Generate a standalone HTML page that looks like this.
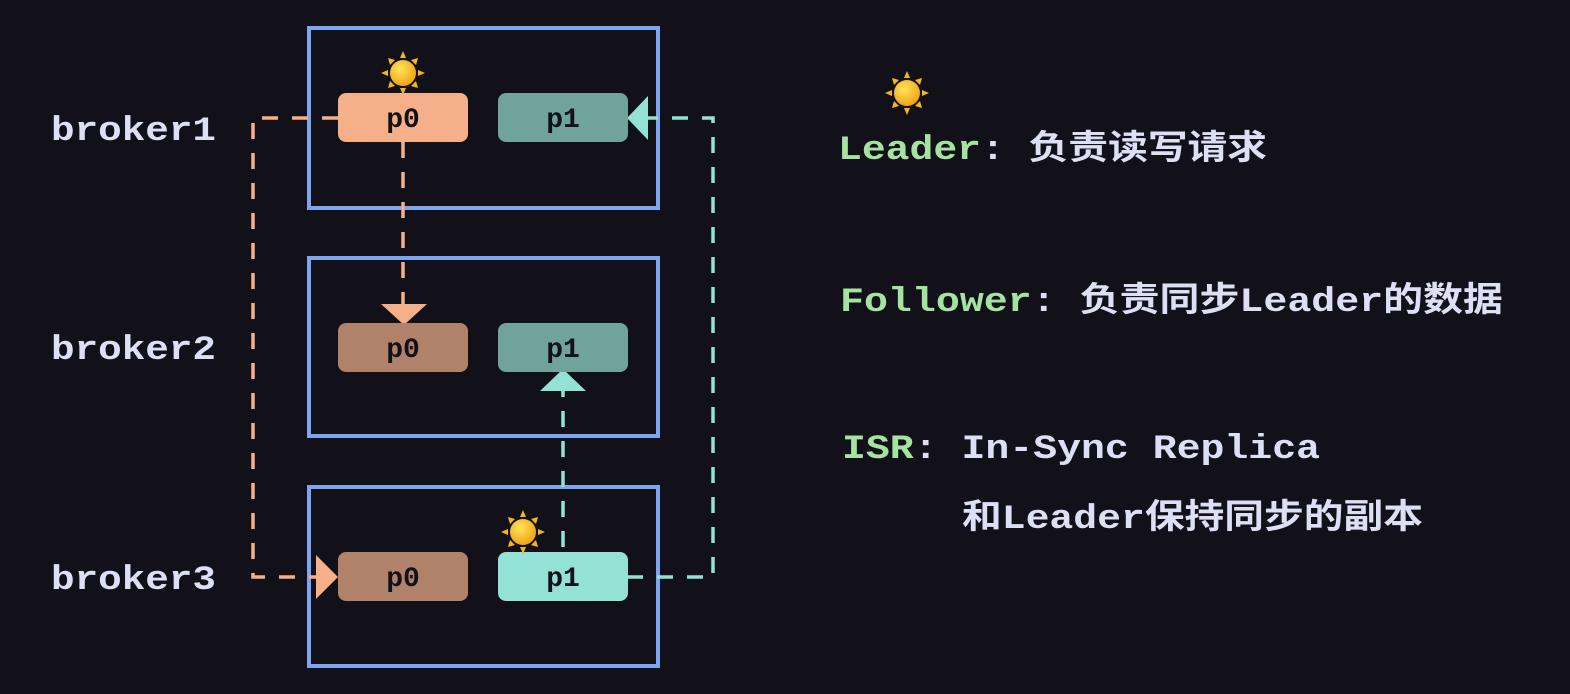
<!DOCTYPE html>
<html><head><meta charset="utf-8"><style>
html,body{margin:0;padding:0;background:#12111a;}
svg{display:block}
text{font-family:"Liberation Mono","Noto Sans CJK SC",monospace;font-weight:bold;}
</style></head><body>
<svg width="1570" height="694" viewBox="0 0 1570 694" xmlns="http://www.w3.org/2000/svg">
<defs>
<radialGradient id="sg" cx="0.4" cy="0.35" r="0.7"><stop offset="0" stop-color="#ffe45a"/><stop offset="1" stop-color="#f0a010"/></radialGradient>
<g id="sun">
<g fill="#f2b718">
<polygon points="0,-22 -3,-15 3,-15"/><polygon points="0,22 -3,15 3,15"/>
<polygon points="-22,0 -15,-3 -15,3"/><polygon points="22,0 15,-3 15,3"/>
<polygon points="-15,-15 -13,-8 -8,-13"/><polygon points="15,-15 13,-8 8,-13"/>
<polygon points="-15,15 -13,8 -8,13"/><polygon points="15,15 13,8 8,13"/>
</g>
<circle r="13" fill="url(#sg)"/>
</g>
</defs>
<rect width="1570" height="694" fill="#12111a"/>
<g fill="none" stroke="#7ea6f0" stroke-width="4">
<rect x="309" y="28" width="349" height="180"/>
<rect x="309" y="258" width="349" height="178"/>
<rect x="309" y="487" width="349" height="179"/>
</g>
<g fill="none" stroke="#f5b08a" stroke-width="3.5" stroke-dasharray="16 14">
<path d="M338 118 H253 V577 H318"/>
<path d="M403 142 V305"/>
</g>
<polygon points="316,555 316,599 338,577" fill="#f5b08a"/>
<polygon points="381,304 427,304 404,325" fill="#f5b08a"/>
<g fill="none" stroke="#94e2d5" stroke-width="3.5" stroke-dasharray="16 14">
<path d="M627 577 H713 V118 H648"/>
<path d="M563 547 V390"/>
</g>
<polygon points="648,96 648,140 627,118" fill="#94e2d5"/>
<polygon points="540,391 586,391 563,369" fill="#94e2d5"/>
<rect x="338" y="93" width="130" height="49" rx="8" fill="#f5b08a"/>
<rect x="498" y="93" width="130" height="49" rx="8" fill="#6fa39c"/>
<rect x="338" y="323" width="130" height="49" rx="8" fill="#b0826a"/>
<rect x="498" y="323" width="130" height="49" rx="8" fill="#6fa39c"/>
<rect x="338" y="552" width="130" height="49" rx="8" fill="#b0826a"/>
<rect x="498" y="552" width="130" height="49" rx="8" fill="#94e2d5"/>
<g font-size="28" fill="#12111a" text-anchor="middle">
<text x="403" y="127">p0</text><text x="563" y="127">p1</text>
<text x="403" y="357">p0</text><text x="563" y="357">p1</text>
<text x="403" y="586">p0</text><text x="563" y="586">p1</text>
</g>
<use href="#sun" x="403" y="73"/>
<use href="#sun" x="523" y="532"/>
<use href="#sun" x="907" y="93"/>
<g font-size="34" fill="#dde0f5">
<text x="51" y="140" textLength="165" lengthAdjust="spacingAndGlyphs">broker1</text>
<text x="51" y="359" textLength="165" lengthAdjust="spacingAndGlyphs">broker2</text>
<text x="51" y="589" textLength="165" lengthAdjust="spacingAndGlyphs">broker3</text>
<text x="838" y="159" textLength="429" lengthAdjust="spacingAndGlyphs"><tspan fill="#a6e3a1">Leader</tspan>: 负责读写请求</text>
<text x="840" y="311" textLength="663" lengthAdjust="spacingAndGlyphs"><tspan fill="#a6e3a1">Follower</tspan>: 负责同步Leader的数据</text>
<text x="842" y="458" textLength="478" lengthAdjust="spacingAndGlyphs"><tspan fill="#a6e3a1">ISR</tspan>: In-Sync Replica</text>
<text x="962" y="528" textLength="461" lengthAdjust="spacingAndGlyphs">和Leader保持同步的副本</text>
</g>
</svg>
</body></html>
